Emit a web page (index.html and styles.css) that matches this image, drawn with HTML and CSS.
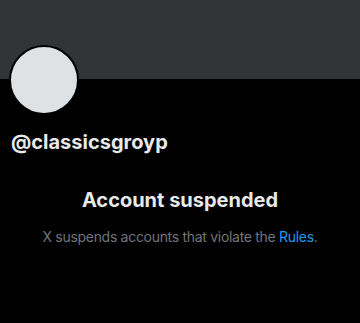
FILE: index.html
```html
<!DOCTYPE html>
<html>
<head>
<meta charset="utf-8">
<link rel="stylesheet" href="styles.css">
</head>
<body>
<div class="banner"></div>
<div class="profile">
  <div class="avatar"></div>
  <div class="handle">@classicsgroyp</div>
</div>
<div class="notice">
  <h1 class="title">Account suspended</h1>
  <p class="desc">X suspends accounts that violate the <span class="link">Rules</span>.</p>
</div>
</body>
</html>
```
FILE: styles.css
```css
html, body {
  margin: 0;
  padding: 0;
  background: #000;
  width: 360px;
  height: 323px;
  overflow: hidden;
  font-family: Inter, "Liberation Sans", sans-serif;
}
.banner {
  height: 79px;
  background: #313537;
}
.profile {
  padding: 0 9px;
}
.avatar {
  width: 66px;
  height: 66px;
  border-radius: 50%;
  background: #dee2e5;
  border: 2px solid #000;
  margin-top: -34px;
}
.handle {
  margin-top: 15px;
  margin-left: 2px;
  color: #e7e9ea;
  font-size: 20px;
  font-weight: 700;
  line-height: 24px;
}
.notice {
  text-align: center;
  margin-top: 34px;
}
.title {
  margin: 0;
  color: #e7e9ea;
  font-size: 20px;
  font-weight: 700;
  line-height: 24px;
}
.desc {
  margin: 15px 0 0;
  color: #71767b;
  font-size: 14px;
  letter-spacing: -0.3px;
  line-height: 20px;
}
.link {
  color: #1d9bf0;
}
```
